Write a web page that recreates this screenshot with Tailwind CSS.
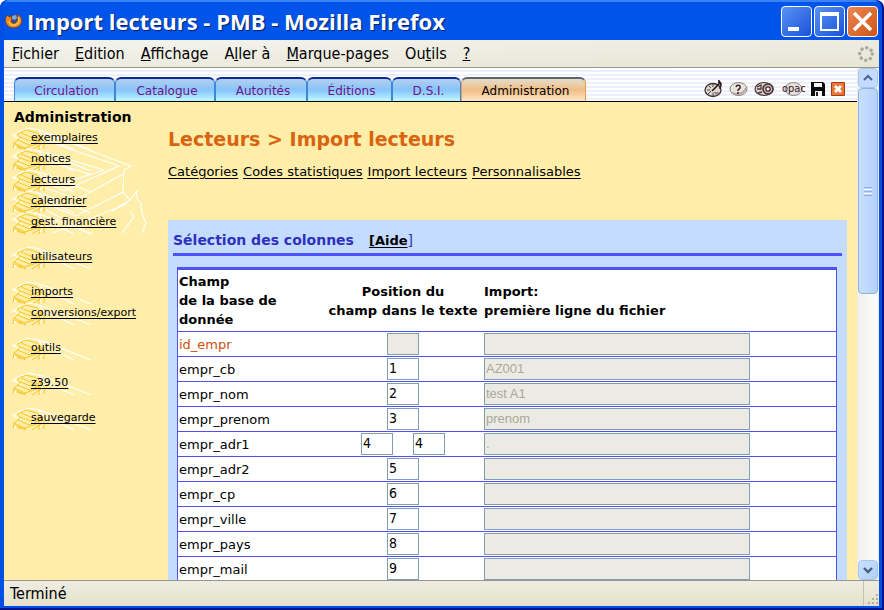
<!DOCTYPE html>
<html lang="fr">
<head>
<meta charset="utf-8">
<title>Import lecteurs - PMB - Mozilla Firefox</title>
<script src="https://cdn.jsdelivr.net/npm/@tailwindcss/browser@4"></script>
</head>
<body class="h-screen overflow-hidden bg-white font-['DejaVu_Sans',Verdana,sans-serif] text-black">
<svg class="hidden" aria-hidden="true">
  <symbol id="books" viewBox="0 0 82 24">
    <g fill="none" stroke="#fff" stroke-width="1.1">
      <path d="M1 9 8 4 17 1 27 3 36 6 79 23M27 3 30 8 62 23M1 22 6 17M0 8 10 13M32 12 28 21"/>
    </g>
    <g fill="none" stroke="#f6c728" stroke-width="1">
      <path d="M5 7 14 3 25 6 29 10 19 14 8 10ZM8 10 6 13 17 18 28 14 29 10M9 6 21 11M6 13 2 16 13 21 25 17M2 16 1 22M3 18 14 23M13 21 12 23M29 11 32 14 32 22M27 15 27 23M20 23 31 16M5 20 10 22"/>
    </g>
  </symbol>
</svg>
<div class="h-full rounded-t-lg bg-[#00138c] pr-[2px] pb-[2px]">
<div class="flex h-full flex-col overflow-hidden rounded-t-lg border-r-3 border-b-2 border-l-4 border-[#0050e6] bg-[#0054ea]">

  <header class="flex h-10 shrink-0 items-center gap-1 border-t-2 border-[#3a83f2] bg-[#0054ea] pl-px">
    <svg class="size-[18px] shrink-0" viewBox="0 0 18 18" aria-hidden="true">
      <circle cx="9" cy="8" r="6" fill="#2b4f9e"/>
      <path d="M7 4 11 3 12 6 10 8 7 7Z" fill="#7fa9dc"/>
      <path d="M1 5 3 3 4 5 7 4 6 7 8 8 6 9C7 12 11 12 12 9L13 4 12 2C16 4 18 8 16 12 13 17 5 17 2 13 0 10 0 8 1 5Z" fill="#e98a24" stroke="#6b3410" stroke-width=".7"/>
      <path d="M13 5C15 8 14 12 10 13 6 14 4 11 4 9" fill="none" stroke="#ffd45a" stroke-width="1.2"/>
    </svg>
    <h1 class="flex-1 truncate font-['Open_Sans',sans-serif] text-[22px] leading-8 font-bold text-white [text-shadow:1px_1px_1px_#0a1f66]">Import lecteurs - PMB - Mozilla Firefox</h1>
    <div class="flex gap-[2px] pr-px">
      <button aria-label="Réduire" class="size-[31px] rounded border border-white bg-linear-to-br from-[#5a92f2] to-[#1c50dc]">
        <svg viewBox="0 0 29 29"><path d="M6 20H17V24H6Z" fill="#fff"/></svg>
      </button>
      <button aria-label="Agrandir" class="size-[31px] rounded border border-white bg-linear-to-br from-[#5a92f2] to-[#1c50dc]">
        <svg viewBox="0 0 29 29"><path d="M5 5H24V24H5ZM7 9V22H22V9Z" fill="#fff" fill-rule="evenodd"/></svg>
      </button>
      <button aria-label="Fermer" class="size-[31px] rounded border border-white bg-linear-to-br from-[#ea8850] to-[#cf5410]">
        <svg viewBox="0 0 29 29"><path d="M6 6 23 23M23 6 6 23" stroke="#fff" stroke-width="3.6"/></svg>
      </button>
    </div>
  </header>

  <nav aria-label="Menu" class="flex h-7 shrink-0 items-center border-b border-[#98968a] bg-linear-to-br from-[#f4f4f0] to-[#e8e5d3] pr-1 pl-2 font-['DejaVu_Sans_Condensed','DejaVu_Sans',sans-serif] text-[16px]">
    <div class="flex flex-1 gap-4 pt-px">
      <button><u>F</u>ichier</button>
      <button><u>E</u>dition</button>
      <button><u>A</u>ffichage</button>
      <button>A<u>l</u>ler à</button>
      <button><u>M</u>arque-pages</button>
      <button>Ou<u>t</u>ils</button>
      <button><u>?</u></button>
    </div>
    <svg class="size-[18px]" viewBox="0 0 18 18" aria-hidden="true"><circle cx="9" cy="9" r="6.3" fill="none" stroke="#aaa9a3" stroke-width="3.6" stroke-linecap="round" stroke-dasharray="0.01 4.94"/></svg>
  </nav>

  <div class="flex min-h-0 flex-1 bg-white">
    <div class="flex min-w-0 flex-1 flex-col overflow-hidden bg-[#ffeea9]">
      <div class="flex h-[34px] shrink-0 items-end border-b border-black bg-[repeating-linear-gradient(180deg,#fff_0px,#fff_2px,#eeeffc_2px,#eeeffc_4px)] pr-3 pl-[10px]">
        <nav aria-label="Modules" class="flex h-6 flex-1 text-[12px] leading-6 text-[#6f128c]">
          <a href="#" class="w-[101px] rounded-t-md border-x border-t-2 border-x-[#3e86dc] border-t-[#0a2f94] bg-linear-to-b from-[#b4cfee] via-[#84c4fa] to-[#c2f8ff] pl-1 text-center">Circulation</a>
          <a href="#" class="w-[100px] rounded-t-md border-x border-t-2 border-x-[#3e86dc] border-t-[#0a2f94] bg-linear-to-b from-[#b4cfee] via-[#84c4fa] to-[#c2f8ff] pl-1 text-center">Catalogue</a>
          <a href="#" class="w-[92px] rounded-t-md border-x border-t-2 border-x-[#3e86dc] border-t-[#0a2f94] bg-linear-to-b from-[#b4cfee] via-[#84c4fa] to-[#c2f8ff] pl-1 text-center">Autorités</a>
          <a href="#" class="w-[85px] rounded-t-md border-x border-t-2 border-x-[#3e86dc] border-t-[#0a2f94] bg-linear-to-b from-[#b4cfee] via-[#84c4fa] to-[#c2f8ff] pl-1 text-center">Éditions</a>
          <a href="#" class="w-[69px] rounded-t-md border-x border-t-2 border-x-[#3e86dc] border-t-[#0a2f94] bg-linear-to-b from-[#b4cfee] via-[#84c4fa] to-[#c2f8ff] pl-1 text-center">D.S.I.</a>
          <a href="#" aria-current="page" class="w-[125px] rounded-t-md border-x border-t-2 border-x-[#e0a050] border-t-[#5c6470] bg-linear-to-b from-[#e2dccb] via-[#f2bd84] to-[#fde6c6] pl-1 text-center text-black">Administration</a>
        </nav>
        <div class="flex h-6 items-center gap-[6px]">
          <button aria-label="Tableau de bord"><svg class="h-[18px] w-[19px]" viewBox="0 0 19 18"><ellipse cx="9" cy="10" rx="8" ry="6.5" fill="#dedad2" stroke="#3f3336" stroke-width="1.3"/><path d="M3 10H6M9 4V7M5 6 7 8M4 14 7 11M9 13V16M12 12 14 14" stroke="#504648"/><path d="M8 11 15 4 15 1 17 4 16 9" fill="none" stroke="#331a1f" stroke-width="1.7"/><path d="M9 12H16L12 15Z" fill="#978d8a"/></svg></button>
          <button aria-label="Aide en ligne"><svg class="h-[18px] w-[19px]" viewBox="0 0 19 18"><ellipse cx="9.500" cy="9" rx="8.500" ry="6.500" fill="#e8e5df" stroke="#86817b"/><path d="M3 13C8 15 15 14 17 8" fill="none" stroke="#b2aaa0" stroke-width="2"/><path d="M7 7C8 4 12 5 11 8L9 10V11M9 12V14" fill="none" stroke="#3f2529" stroke-width="1.500"/></svg></button>
          <button aria-label="Paramètres"><svg class="h-[18px] w-[22px]" viewBox="0 0 22 18"><ellipse cx="10" cy="9" rx="9" ry="6.500" fill="#d6d1cb" stroke="#443538" stroke-width="1.200"/><circle cx="14" cy="9" r="5" fill="#c9c0be" stroke="#452a31" stroke-width="1.500"/><circle cx="14" cy="9" r="2.200" fill="#fff" stroke="#452a31" stroke-width="1.300"/><path d="M3 7 7 5 7 9 3 9M4 13 8 12" fill="none" stroke="#55393f" stroke-width="1.300"/></svg></button>
          <button aria-label="OPAC"><svg class="h-[18px] w-[23px]" viewBox="0 0 23 18"><ellipse cx="11.500" cy="9" rx="8.500" ry="6.500" fill="#e3e0db" stroke="#89847e"/><text x="0" y="12" font-family="DejaVu Sans Condensed, DejaVu Sans, sans-serif" font-size="11" fill="#401720">opac</text></svg></button>
          <button aria-label="Sauvegarder"><svg class="h-[18px] w-[14px]" viewBox="0 0 14 18"><path d="M0 2H12L14 4V16H0Z" fill="#0c0708"/><path d="M3 3H11V7H3ZM4 11H11V16H4Z" fill="#f7f7f7"/><path d="M5 12H7V16H5Z" fill="#222"/></svg></button>
          <button aria-label="Quitter"><svg class="h-[18px] w-[14px]" viewBox="0 0 14 18"><path d="M.5 2.500H13.500V15.500H.5Z" fill="#e97636" stroke="#a83b14"/><path d="M4 6 10 12M10 6 4 12" stroke="#fff" stroke-width="2.800"/></svg></button>
        </div>
      </div>

      <div class="flex min-h-0 flex-1">
        <aside class="relative isolate w-[164px] shrink-0 pt-[5px]">
          <svg class="absolute top-[26px] left-2 -z-10 h-[110px] w-[140px]" viewBox="0 0 140 110" fill="none" stroke="#fff" stroke-width="1.1" aria-hidden="true"><path d="M32 5 119 38 112 42 111 64 118 72 125 62 124 69 129 76 130 86 134 95 130 105M32 12 107 38 52 63 28 50M35 25 92 42 52 55 32 48M40 34 80 47M111 46 66 71 30 59M111 64 64 88 32 75M118 72 100 83M118 83 122 89 110 105M34 82 62 97 115 76M40 105 62 98 80 106"/></svg>
          <h2 class="pl-[10px] text-[14px] leading-5 font-bold">Administration</h2>
          <div class="flex flex-col gap-[14px] pl-2 text-[11px] leading-[21px] underline underline-offset-2">
            <ul>
              <li class="relative isolate pl-[19px]"><svg class="absolute top-0 left-0 -z-10 h-6 w-[82px]"><use href="#books"/></svg><a href="#">exemplaires</a></li>
              <li class="relative isolate pl-[19px]"><svg class="absolute top-0 left-0 -z-10 h-6 w-[82px]"><use href="#books"/></svg><a href="#">notices</a></li>
              <li class="relative isolate pl-[19px]"><svg class="absolute top-0 left-0 -z-10 h-6 w-[82px]"><use href="#books"/></svg><a href="#">lecteurs</a></li>
              <li class="relative isolate pl-[19px]"><svg class="absolute top-0 left-0 -z-10 h-6 w-[82px]"><use href="#books"/></svg><a href="#">calendrier</a></li>
              <li class="relative isolate pl-[19px]"><svg class="absolute top-0 left-0 -z-10 h-6 w-[82px]"><use href="#books"/></svg><a href="#">gest. financière</a></li>
            </ul>
            <ul>
              <li class="relative isolate pl-[19px]"><svg class="absolute top-0 left-0 -z-10 h-6 w-[82px]"><use href="#books"/></svg><a href="#">utilisateurs</a></li>
            </ul>
            <ul>
              <li class="relative isolate pl-[19px]"><svg class="absolute top-0 left-0 -z-10 h-6 w-[82px]"><use href="#books"/></svg><a href="#">imports</a></li>
              <li class="relative isolate pl-[19px]"><svg class="absolute top-0 left-0 -z-10 h-6 w-[82px]"><use href="#books"/></svg><a href="#">conversions/export</a></li>
            </ul>
            <ul>
              <li class="relative isolate pl-[19px]"><svg class="absolute top-0 left-0 -z-10 h-6 w-[82px]"><use href="#books"/></svg><a href="#">outils</a></li>
            </ul>
            <ul>
              <li class="relative isolate pl-[19px]"><svg class="absolute top-0 left-0 -z-10 h-6 w-[82px]"><use href="#books"/></svg><a href="#">z39.50</a></li>
            </ul>
            <ul>
              <li class="relative isolate pl-[19px]"><svg class="absolute top-0 left-0 -z-10 h-6 w-[82px]"><use href="#books"/></svg><a href="#">sauvegarde</a></li>
            </ul>
          </div>
        </aside>

        <main class="min-w-0 flex-1 overflow-hidden pt-[23px] pr-[10px]">
          <h2 class="text-[19px] leading-7 font-bold text-[#d9640f]">Lecteurs &gt; Import lecteurs</h2>
          <nav aria-label="Lecteurs" class="flex gap-[5px] pt-[9px] text-[13px] leading-5 underline underline-offset-2">
            <a href="#">Catégories</a>
            <a href="#">Codes statistiques</a>
            <a href="#">Import lecteurs</a>
            <a href="#">Personnalisables</a>
          </nav>
          <form class="mt-[38px] bg-[#c4dcff] px-[5px] pt-[10px]">
            <h3 class="flex items-baseline gap-[15px] border-b-3 border-[#5050f8] pb-[2px] text-[14px] leading-[21px] font-bold text-[#3030c0]">Sélection des colonnes <span class="font-normal"><a href="#" class="text-[13px] font-bold text-black underline underline-offset-2">[Aide</a>]</span></h3>
            <div class="mr-[5px] ml-1 mt-[11px] border-x border-t-3 border-[#5050f8] bg-white">
              <table class="w-full table-fixed border-separate border-spacing-0 text-[13px]">
                <colgroup><col class="w-[150px]"><col class="w-[150px]"><col></colgroup>
                <thead>
                  <tr class="h-[61px] text-left leading-[19px]">
                    <th class="p-0 pl-px">Champ<br>de la base de<br>donnée</th>
                    <th class="p-0 text-center whitespace-nowrap">Position du<br>champ dans le texte</th>
                    <th class="p-0 pl-[6px]">Import:<br>première ligne du fichier</th>
                  </tr>
                </thead>
                <tbody id="rows"></tbody>
              </table>
            </div>
          </form>
        </main>
      </div>
    </div>

    <div role="scrollbar" aria-controls="rows" aria-valuenow="0" class="flex w-[22px] shrink-0 flex-col border-x border-[#eeede5] bg-linear-to-r from-[#f1f0ec] to-[#fefefb]">
      <button aria-label="Monter" class="h-[20px] rounded border border-[#a9c5ee] bg-[#c3dbff]"><svg class="mx-auto h-4 w-4" viewBox="0 0 16 16"><path d="M4 10 8 6 12 10" fill="none" stroke="#4a6491" stroke-width="2"/></svg></button>
      <div class="flex h-[206px] flex-col items-center justify-center gap-px rounded border border-[#8fb2df] bg-linear-to-r from-[#c9deff] to-[#b3d2f8]">
        <i class="h-px w-2 bg-[#8cb0f0]"></i><i class="h-px w-2 bg-white"></i><i class="h-px w-2 bg-[#8cb0f0]"></i><i class="h-px w-2 bg-white"></i><i class="h-px w-2 bg-[#8cb0f0]"></i>
      </div>
      <button aria-label="Descendre" class="mt-auto h-[20px] rounded border border-[#a9c5ee] bg-linear-to-br from-[#cbe1ff] to-[#abd0f2]"><svg class="mx-auto h-4 w-4" viewBox="0 0 16 16"><path d="M4 6 8 10 12 6" fill="none" stroke="#4a5c80" stroke-width="2.400"/></svg></button>
    </div>
  </div>

  <footer class="flex h-[26px] shrink-0 items-center border-t border-[#98968a] bg-linear-to-b from-[#efede2] to-[#e5e1cc] pl-[6px] font-['DejaVu_Sans_Condensed','DejaVu_Sans',sans-serif] text-[16px]">
    <span class="flex-1">Terminé</span>
    <span class="h-full w-[16px] border-l border-[#c6c2af]"><svg class="h-[25px] w-[16px]" viewBox="0 0 16 25" fill="#b5b19e" aria-hidden="true"><path d="M12 13H14V15H12ZM8 17H10V19H8ZM12 17H14V19H12ZM4 21H6V23H4ZM8 21H10V23H8ZM12 21H14V23H12Z"/></svg></span>
  </footer>
</div>
</div>

<script>
  const fields = [
    { name: 'id_empr', positions: [''], sample: '', locked: true },
    { name: 'empr_cb', positions: ['1'], sample: 'AZ001' },
    { name: 'empr_nom', positions: ['2'], sample: 'test A1' },
    { name: 'empr_prenom', positions: ['3'], sample: 'prenom' },
    { name: 'empr_adr1', positions: ['4', '4'], sample: '.' },
    { name: 'empr_adr2', positions: ['5'], sample: '' },
    { name: 'empr_cp', positions: ['6'], sample: '' },
    { name: 'empr_ville', positions: ['7'], sample: '' },
    { name: 'empr_pays', positions: ['8'], sample: '' },
    { name: 'empr_mail', positions: ['9'], sample: '' }
  ];
  document.getElementById('rows').innerHTML = fields.map(f => `
    <tr class="h-[25px]">
      <td class="border-t border-[#5050f8] p-0 pt-[2px] pl-px ${f.locked ? 'text-[#d0500c]' : ''}"><label for="${f.name}">${f.name}</label></td>
      <td class="border-t border-[#5050f8] p-0 py-px"><div class="flex justify-center gap-5">${f.positions.map((p, i) => `<input ${i ? `aria-label="${f.name} ${i + 1}"` : `id="${f.name}"`} value="${p}" ${f.locked ? 'disabled' : ''} class="h-[22px] w-8 border border-[#7f9db9] bg-white px-px pb-[3px] font-['DejaVu_Sans_Condensed','DejaVu_Sans',sans-serif] text-[14px] disabled:bg-[#ebebe4]">`).join('')}</div></td>
      <td class="border-t border-[#5050f8] p-0 py-px pl-[6px]"><input aria-label="Import ${f.name}" value="${f.sample}" disabled class="block h-[22px] w-[266px] border border-[#7f9db9] bg-[#ebebe4] px-px pb-[2px] font-['Liberation_Sans',Arial,sans-serif] text-[13px] text-[#aca899]"></td>
    </tr>`).join('');
</script>
</body>
</html>
